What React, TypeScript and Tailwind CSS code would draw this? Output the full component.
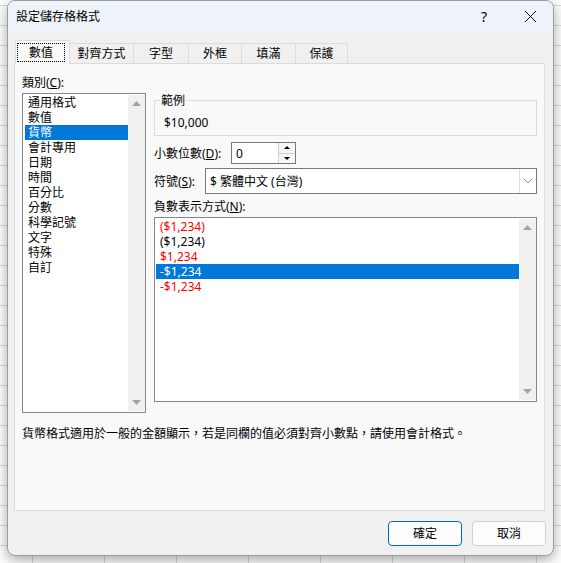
import { X, ChevronDown } from 'lucide-react';

const categories = ['通用格式', '數值', '貨幣', '會計專用', '日期', '時間', '百分比', '分數', '科學記號', '文字', '特殊', '自訂'];

const negatives = [
  { label: '($1,234)', red: true },
  { label: '($1,234)', red: false },
  { label: '$1,234', red: true },
  { label: '-$1,234', red: false, selected: true },
  { label: '-$1,234', red: true },
];

const tabs = [
  { label: '對齊方式', w: 'w-[64px]' },
  { label: '字型', w: 'w-[55px]' },
  { label: '外框', w: 'w-[53px]' },
  { label: '填滿', w: 'w-[54px]' },
  { label: '保護', w: 'w-[52px]' },
];

function Tri({ up }: { up?: boolean }) {
  return (
    <svg width="9" height="5" viewBox="0 0 9 5">
      <path d={up ? 'M0 5 L4.5 0 L9 5 Z' : 'M0 0 L4.5 5 L9 0 Z'} fill="currentColor" />
    </svg>
  );
}

function SmallTri({ up }: { up?: boolean }) {
  return (
    <svg width="6" height="3" viewBox="0 0 6 3">
      <path d={up ? 'M0 3 L3 0 L6 3 Z' : 'M0 0 L3 3 L6 0 Z'} fill="currentColor" />
    </svg>
  );
}

function ScrollBar() {
  return (
    <div className="flex w-[17px] flex-col items-center justify-between bg-[#f0f0f0] py-[6px] text-[#a3a3a3]">
      <Tri up />
      <Tri />
    </div>
  );
}

export default function App() {
  return (
    <div className="h-[563px] w-[561px] overflow-hidden bg-white bg-[linear-gradient(#dadada_1px,transparent_1px),linear-gradient(90deg,#dadada_1px,transparent_1px)] bg-size-[72px_20px] bg-position-[32px_5px] font-['Noto_Sans','Noto_Sans_CJK_TC',sans-serif] text-[12px] leading-[15px] text-black">
      <div className="ml-[7px] flex h-[556px] w-[547px] flex-col overflow-hidden rounded-lg border border-[#9b9b9b] bg-[#f0f0f0] shadow-[0_4px_14px_rgba(0,0,0,0.35)]">
        {/* Title bar */}
        <div className="flex h-[30px] shrink-0 items-center bg-[#eef3f9] pl-[8px]">
          <span className="flex-1">設定儲存格格式</span>
          <span className="flex w-[46px] justify-center text-[14px]">?</span>
          <span className="flex w-[46px] justify-center">
            <X size={21} strokeWidth={1.1} />
          </span>
        </div>

        {/* Tabs */}
        <div className="ml-[7px] mt-[9px] flex h-[23px] shrink-0 items-end">
          <div className="relative z-10 -mb-px h-[24px] w-[55px] border-x border-t border-[#dcdcdc] bg-[#f9f9f9] pl-px pt-[2px]">
            <div className="flex h-[19px] w-[48px] items-center justify-center border border-dotted border-black">數值</div>
          </div>
          {tabs.map((t) => (
            <div
              key={t.label}
              className={`flex h-[20px] items-center justify-center border-r border-t border-[#dcdcdc] bg-[#f0f0f0] ${t.w}`}
            >
              {t.label}
            </div>
          ))}
        </div>

        {/* Panel */}
        <div className="ml-[6px] h-[448px] w-[531px] shrink-0 border border-[#dcdcdc] bg-[#f9f9f9] px-[7px] pt-[11px]">
          <div className="flex items-start gap-[8px]">
            {/* Category column */}
            <div className="flex flex-col">
              <span>
                類別(<span className="underline">C</span>):
              </span>
              <div className="mt-[3px] flex h-[320px] w-[124px] border border-[#828790] bg-white p-px pr-0">
                <div className="flex-1 pl-px">
                  {categories.map((c) => (
                    <div
                      key={c}
                      className={`h-[15px] pl-[3px] ${c === '貨幣' ? 'bg-[#0078d7] text-white' : ''}`}
                    >
                      {c}
                    </div>
                  ))}
                </div>
                <ScrollBar />
              </div>
            </div>

            {/* Right column */}
            <div className="flex flex-1 flex-col pt-[18px]">
              <fieldset className="w-full border border-[#dcdcdc] px-[5px] pb-[5px] pt-[7px]">
                <legend className="px-px">範例</legend>
                <div className="pl-[4px]">$10,000</div>
              </fieldset>

              <div className="mt-[6px] flex h-[22px] items-center">
                <span className="w-[77px]">
                  小數位數(<span className="underline">D</span>):
                </span>
                <div className="flex h-[22px] w-[65px] border border-[#7a7a7a] bg-white">
                  <span className="flex flex-1 items-center pl-[4px]">0</span>
                  <div className="flex w-[17px] flex-col border-l border-[#cfcfcf] bg-[#f7f7f7]">
                    <div className="flex flex-1 items-center justify-center border-b border-[#cfcfcf]">
                      <SmallTri up />
                    </div>
                    <div className="flex flex-1 items-center justify-center">
                      <SmallTri />
                    </div>
                  </div>
                </div>
              </div>

              <div className="mt-[4px] flex h-[26px] items-center">
                <span className="w-[51px]">
                  符號(<span className="underline">S</span>):
                </span>
                <div className="flex h-[26px] flex-1 border border-[#7a7a7a] bg-white">
                  <span className="flex flex-1 items-center pl-[4px]">$ 繁體中文 (台灣)</span>
                  <div className="flex w-[17px] items-center justify-center border-l border-[#dcdcdc] text-[#606060]">
                    <ChevronDown size={16} strokeWidth={1} />
                  </div>
                </div>
              </div>

              <span className="mt-[5px]">
                負數表示方式(<span className="underline">N</span>):
              </span>
              <div className="mt-[3px] flex h-[185px] w-full border border-[#828790] bg-white p-px pr-0">
                <div className="flex-1">
                  {negatives.map((n, i) => (
                    <div
                      key={i}
                      className={`h-[15px] pl-[4px] ${
                        n.selected ? 'bg-[#0078d7] text-white' : n.red ? 'text-[#ff0000]' : ''
                      }`}
                    >
                      {n.label}
                    </div>
                  ))}
                </div>
                <ScrollBar />
              </div>
            </div>
          </div>

          <p className="mt-[13px]">
            貨幣格式適用於一般的金額顯示，若是同欄的值必須對齊小數點，請使用會計格式。
          </p>
        </div>

        {/* Buttons */}
        <div className="mt-[10px] flex justify-end gap-[10px] pr-[7px]">
          <button className="h-[25px] w-[74px] rounded-[4px] border border-[#0067c0] bg-[#fdfdfd]">確定</button>
          <button className="h-[25px] w-[74px] rounded-[4px] border border-[#d1d1d1] bg-[#fdfdfd]">取消</button>
        </div>
      </div>
    </div>
  );
}
